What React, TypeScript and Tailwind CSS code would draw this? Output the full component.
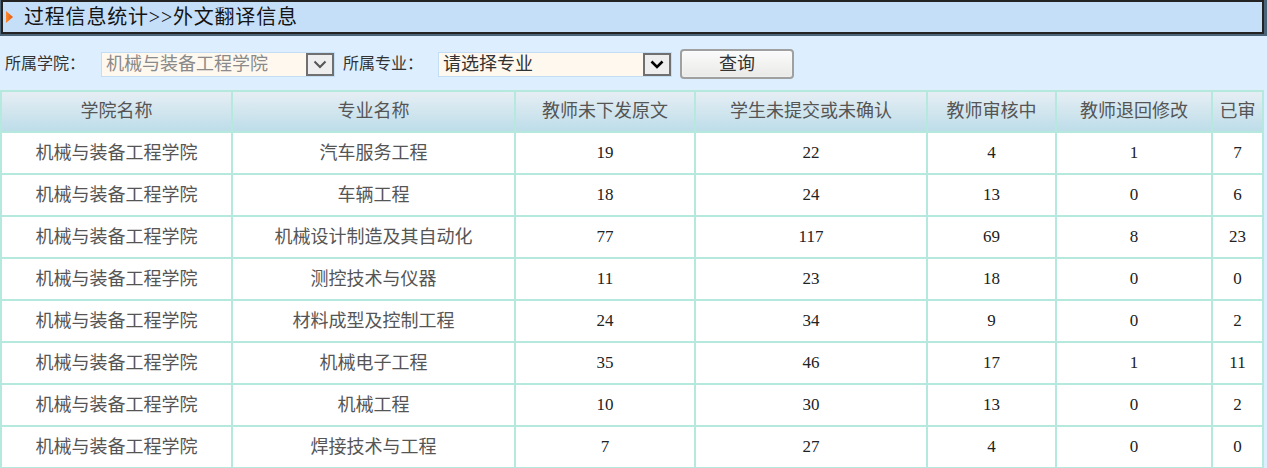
import React from 'react';

const rows: [string, number, number, number, number, number][] = [
  ['汽车服务工程', 19, 22, 4, 1, 7],
  ['车辆工程', 18, 24, 13, 0, 6],
  ['机械设计制造及其自动化', 77, 117, 69, 8, 23],
  ['测控技术与仪器', 11, 23, 18, 0, 0],
  ['材料成型及控制工程', 24, 34, 9, 0, 2],
  ['机械电子工程', 35, 46, 17, 1, 11],
  ['机械工程', 10, 30, 13, 0, 2],
  ['焊接技术与工程', 7, 27, 4, 0, 0],
];

const headers = ['学院名称', '专业名称', '教师未下发原文', '学生未提交或未确认', '教师审核中', '教师退回修改', '已审'];

const font = { fontFamily: '"Liberation Serif", "Noto Sans CJK SC", serif' };

const FakeSelect = ({ value, muted }: { value: string; muted?: boolean }) => (
  <div className="flex h-[25px] w-[234px] border border-[#c2ddf4] bg-[#fff8ee]">
    <div className={`flex-1 pl-[4px] text-[18px] leading-[23px] whitespace-nowrap overflow-hidden ${muted ? 'text-[#8a8a8a]' : 'text-[#333]'}`}>
      {value}
    </div>
    <div className="flex w-[28px] items-center justify-center border-2 border-[#707070] bg-[#eeeeee]">
      <svg width="14" height="9" viewBox="0 0 14 9">
        <path d="M1.5 1.5 L7 7 L12.5 1.5" fill="none" stroke={muted ? '#555' : '#000'} strokeWidth={muted ? 2 : 2.6} />
      </svg>
    </div>
  </div>
);

export default function App() {
  return (
    <div className="min-h-screen bg-[#ddefff] text-[#333]" style={font}>
      {/* Title bar */}
      <div className="w-[1267px] border-l border-r-[3px] border-b-2 border-[#4b6478]">
        <div className="flex h-[34px] items-center border-2 border-[#232323] bg-[#c6dff9]">
          <svg width="9" height="12" viewBox="0 0 9 12" className="ml-[2px]">
            <defs>
              <linearGradient id="tri" x1="0" y1="0" x2="1" y2="0">
                <stop offset="0" stopColor="#ff8a2a" />
                <stop offset="1" stopColor="#e2560f" />
              </linearGradient>
            </defs>
            <path d="M1 0 L8 6 L1 12 Z" fill="url(#tri)" />
          </svg>
          <span className="ml-[10px] text-[20px] leading-none tracking-[0.8px] text-[#141414]">过程信息统计&gt;&gt;外文翻译信息</span>
        </div>
      </div>

      {/* Filter row */}
      <div className="flex h-[54px] items-center pl-[5px] pt-[2px]">
        <span className="w-[80px] text-[16px] text-[#333]">所属学院：</span>
        <div className="ml-[16px]">
          <FakeSelect value="机械与装备工程学院" muted />
        </div>
        <span className="ml-[8px] w-[80px] text-[16px] text-[#333]">所属专业：</span>
        <div className="ml-[15px]">
          <FakeSelect value="请选择专业" />
        </div>
        <button className="ml-[8px] h-[30px] w-[114px] rounded-[4px] border-2 border-[#a0a0a0] bg-gradient-to-b from-[#fbfbfb] to-[#e9e9e7] text-[18px] text-[#333] shadow-[inset_0_0_2px_#ffffff]">
          查询
        </button>
      </div>

      {/* Table */}
      <div className="grid w-[1264px] grid-cols-[229px_281px_178px_230px_127px_154px_49px] gap-[2px] border-2 border-[#b6e9dd] bg-[#b6e9dd]">
        {headers.map((h) => (
          <div
            key={h}
            className="flex h-[39px] items-center justify-center overflow-hidden whitespace-nowrap bg-gradient-to-b from-[#e6eef4] to-[#bddde9] text-[18px] text-[#555]"
          >
            {h}
          </div>
        ))}
        {rows.map((r) => (
          <React.Fragment key={r[0]}>
            <div className="flex h-[40px] items-center justify-center bg-white text-[18px] text-[#555]">机械与装备工程学院</div>
            <div className="flex h-[40px] items-center justify-center bg-white text-[18px] text-[#555]">{r[0]}</div>
            {r.slice(1).map((n, i) => (
              <div key={i} className="flex h-[40px] items-center justify-center bg-white text-[17px] text-[#222]">
                {n}
              </div>
            ))}
          </React.Fragment>
        ))}
      </div>
    </div>
  );
}
